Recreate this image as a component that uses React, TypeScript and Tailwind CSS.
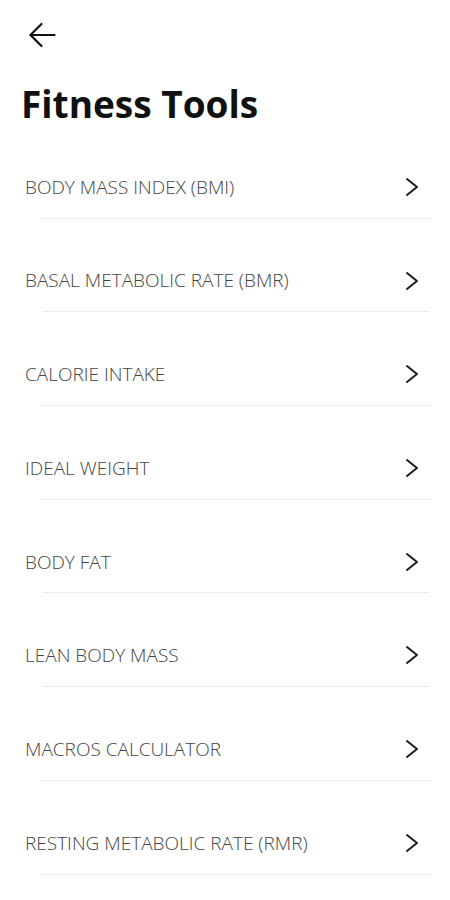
import React from 'react';

const tools = [
  'BODY MASS INDEX (BMI)',
  'BASAL METABOLIC RATE (BMR)',
  'CALORIE INTAKE',
  'IDEAL WEIGHT',
  'BODY FAT',
  'LEAN BODY MASS',
  'MACROS CALCULATOR',
  'RESTING METABOLIC RATE (RMR)',
];

function BackArrow() {
  return (
    <svg width="28" height="28" viewBox="0 0 28 28" fill="none" stroke="#111" strokeWidth="2.2" strokeLinecap="round" strokeLinejoin="round">
      <path d="M2.5 14H26.5" />
      <path d="M13.5 3L2.5 14L13.5 25" />
    </svg>
  );
}

function Chevron() {
  return (
    <svg width="16" height="20" viewBox="0 0 16 20" fill="none" stroke="#1a1a1a" strokeWidth="2" strokeLinecap="round" strokeLinejoin="round">
      <path d="M3 2L13 10L3 18" />
    </svg>
  );
}

function App() {
  return (
    <div className="min-h-screen bg-white font-['Open_Sans',sans-serif]">
      <div className="pl-[28px] pt-[21px] h-[62px]">
        <BackArrow />
      </div>
      <h1 className="mt-[20px] pl-[21px] text-[37px] leading-[44px] font-bold text-[#111]">
        Fitness Tools
      </h1>
      <ul className="-mt-[1px]">
        {tools.map((t) => (
          <li key={t} className="h-[93.7px] flex flex-col">
            <div className="flex items-center justify-between pl-[25px] pr-[30px] pt-[50px] h-[74px]">
              <span className="text-[19px] font-light text-[#444]">{t}</span>
              <Chevron />
            </div>
            <div className="mt-auto ml-[42px] mr-[20px] border-b border-[#ececec]" />
          </li>
        ))}
      </ul>
    </div>
  );
}

export default App;
